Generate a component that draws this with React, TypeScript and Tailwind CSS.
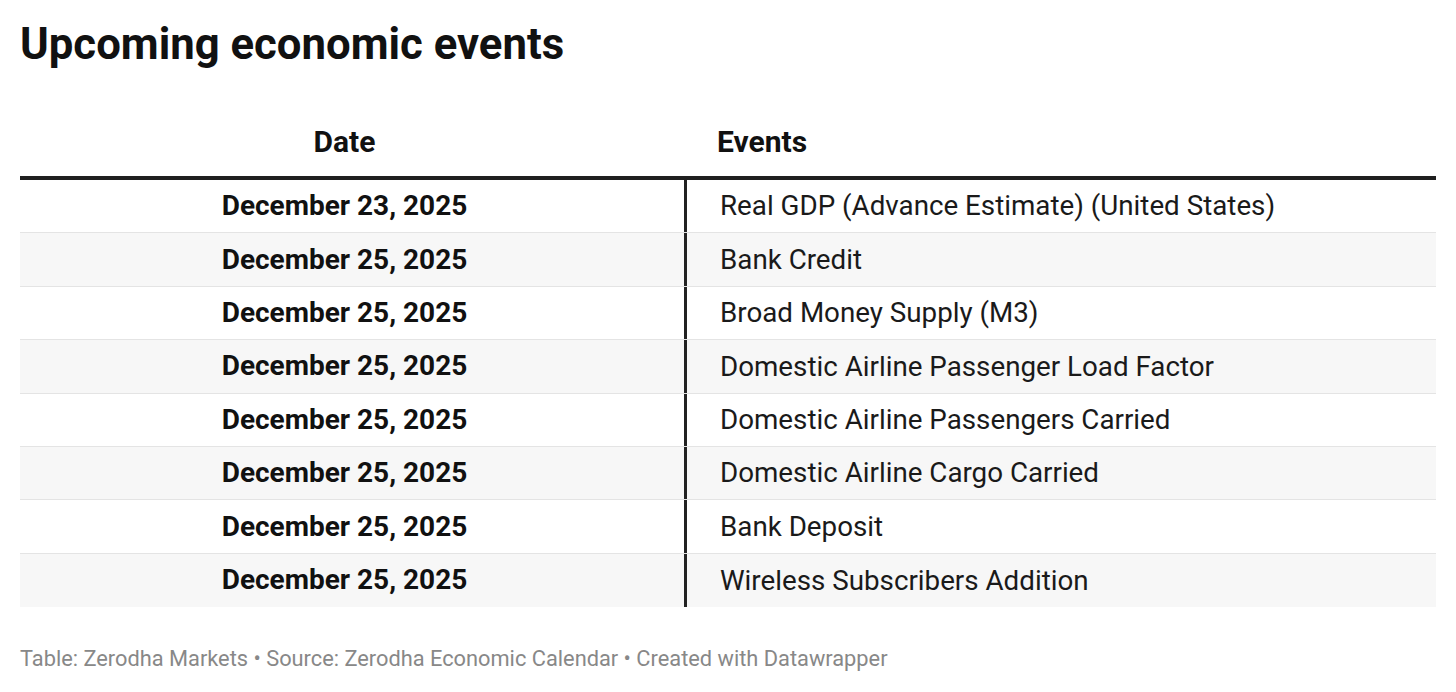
const rows: [string, string][] = [
  ["December 23, 2025", "Real GDP (Advance Estimate) (United States)"],
  ["December 25, 2025", "Bank Credit"],
  ["December 25, 2025", "Broad Money Supply (M3)"],
  ["December 25, 2025", "Domestic Airline Passenger Load Factor"],
  ["December 25, 2025", "Domestic Airline Passengers Carried"],
  ["December 25, 2025", "Domestic Airline Cargo Carried"],
  ["December 25, 2025", "Bank Deposit"],
  ["December 25, 2025", "Wireless Subscribers Addition"],
];

export default function App() {
  return (
    <div
      className="w-[1456px] h-[692px] bg-white px-[20px] pt-[18px] text-[#111]"
      style={{ fontFamily: "Roboto, 'Liberation Sans', sans-serif" }}
    >
      <h1 className="text-[43.7px] leading-[52px] font-bold">Upcoming economic events</h1>

      <div className="mt-[48px] w-[1416px]">
        {/* header */}
        <div className="flex items-end h-[62px] border-b-[4px] border-[#1f1f1f] pb-[16px]">
          <div className="w-[664px] pr-[15px] text-center text-[30px] leading-[36px] font-bold">
            Date
          </div>
          <div className="pl-[33px] text-[30px] leading-[36px] font-bold">Events</div>
        </div>

        {rows.map(([date, ev], i) => (
          <div
            key={i}
            className={
              "flex h-[53.4px] " +
              (i % 2 === 1 ? "bg-[#f7f7f7] " : "bg-white ") +
              (i < rows.length - 1 ? "border-b border-[#e4e4e4]" : "")
            }
          >
            <div className="w-[664px] pr-[15px] flex items-center justify-center text-[28px] font-bold">
              {date}
            </div>
            <div className="w-[3px] bg-[#222]" />
            <div className="flex items-center pl-[33px] text-[27.75px] text-[#1a1a1a]">{ev}</div>
          </div>
        ))}
      </div>

      <div className="mt-[39px] text-[21.8px] leading-[26px] text-[#888]">
        Table: Zerodha Markets • Source: Zerodha Economic Calendar • Created with Datawrapper
      </div>
    </div>
  );
}
